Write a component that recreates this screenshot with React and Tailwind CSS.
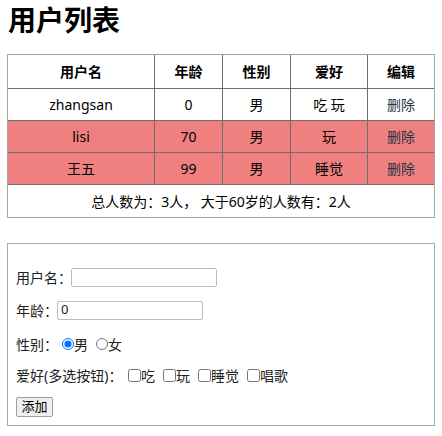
import { useState } from 'react';

const users = [
  { name: 'zhangsan', age: 0, sex: '男', hobby: '吃 玩' },
  { name: 'lisi', age: 70, sex: '男', hobby: '玩' },
  { name: '王五', age: 99, sex: '男', hobby: '睡觉' },
];

const font = "font-['Noto_Sans','Noto_Sans_CJK_SC',sans-serif]";

export default function App() {
  const [sex, setSex] = useState('男');
  const [age, setAge] = useState(0);
  const old = users.filter(u => u.age > 60).length;

  // column widths include each cell's right border
  const cell = 'flex items-center justify-center border-r border-b border-[#6e6e6e]';
  const last = 'flex items-center justify-center border-b border-[#6e6e6e]';
  const label = 'shrink-0 whitespace-nowrap';

  return (
    <div className={`${font} text-[14px] text-black bg-white w-[442px] h-[436px]`}>
      <h1 className="h-[40px] leading-[40px] pl-[8px] text-[28px] font-bold">用户列表</h1>

      {/* user table */}
      <div className="ml-[7px] mt-[14px] w-[428px] border border-[#a6a6a6] grid grid-cols-[147px_68px_68px_77px_66px]">
        <div className={`${cell} h-[34px] font-bold`}>用户名</div>
        <div className={`${cell} h-[34px] font-bold`}>年龄</div>
        <div className={`${cell} h-[34px] font-bold`}>性别</div>
        <div className={`${cell} h-[34px] font-bold`}>爱好</div>
        <div className={`${last} h-[34px] font-bold`}>编辑</div>
        {users.map(u => {
          const bg = u.age > 60 ? 'bg-[#f08080]' : '';
          return [
            <div key={u.name + 'n'} className={`${cell} ${bg} h-[32px]`}>{u.name}</div>,
            <div key={u.name + 'a'} className={`${cell} ${bg} h-[32px]`}>{u.age}</div>,
            <div key={u.name + 's'} className={`${cell} ${bg} h-[32px]`}>{u.sex}</div>,
            <div key={u.name + 'h'} className={`${cell} ${bg} h-[32px]`}>{u.hobby}</div>,
            <div key={u.name + 'd'} className={`${last} ${bg} h-[32px] text-[#263445]`}>删除</div>,
          ];
        })}
        <div className="col-span-5 h-[32px] flex items-center justify-center">
          总人数为：{users.length}人， 大于60岁的人数有：{old}人
        </div>
      </div>

      {/* add form */}
      <div className="ml-[7px] mt-[25px] w-[428px] h-[183px] border border-[#a9a9a9] pl-[8px] pt-[23px] text-[#222]">
        <div className="h-[20px] flex items-center">
          <span className={`${label} w-[55px]`}>用户名：</span>
          <input className="w-[146px] h-[19px] border border-[#bdbdbd] rounded-[2px] px-[3px] text-[13px]" />
        </div>
        <div className="h-[20px] mt-[13px] flex items-center">
          <span className={`${label} w-[41px]`}>年龄：</span>
          <input
            value={age}
            onChange={e => setAge(e.target.value)}
            className="w-[146px] h-[19px] border border-[#bdbdbd] rounded-[2px] px-[3px] text-[13px] text-[#1a1a40]"
          />
        </div>
        <div className="h-[20px] mt-[14px] flex items-center">
          <span className={`${label} w-[42px]`}>性别：</span>
          <label className="flex items-center">
            <input type="radio" name="sex" checked={sex === '男'} onChange={() => setSex('男')} className="ml-[4px] w-[12px] h-[12px]" />
            男
          </label>
          <label className="flex items-center">
            <input type="radio" name="sex" checked={sex === '女'} onChange={() => setSex('女')} className="ml-[8px] w-[12px] h-[12px]" />
            女
          </label>
        </div>
        <div className="h-[20px] mt-[11px] flex items-center">
          <span className={`${label} w-[108px]`}>爱好(多选按钮)：</span>
          {['吃', '玩', '睡觉', '唱歌'].map((h, i) => (
            <label key={h} className="flex items-center">
              <input type="checkbox" className={`${i === 0 ? 'ml-[4px]' : 'ml-[8px]'} w-[13px] h-[13px]`} />
              {h}
            </label>
          ))}
        </div>
        <button className="mt-[12px] w-[37px] h-[20px] bg-[#efefef] border border-[#a0a0a0] rounded-[2px] text-[13px] text-black flex items-center justify-center">
          添加
        </button>
      </div>
    </div>
  );
}
